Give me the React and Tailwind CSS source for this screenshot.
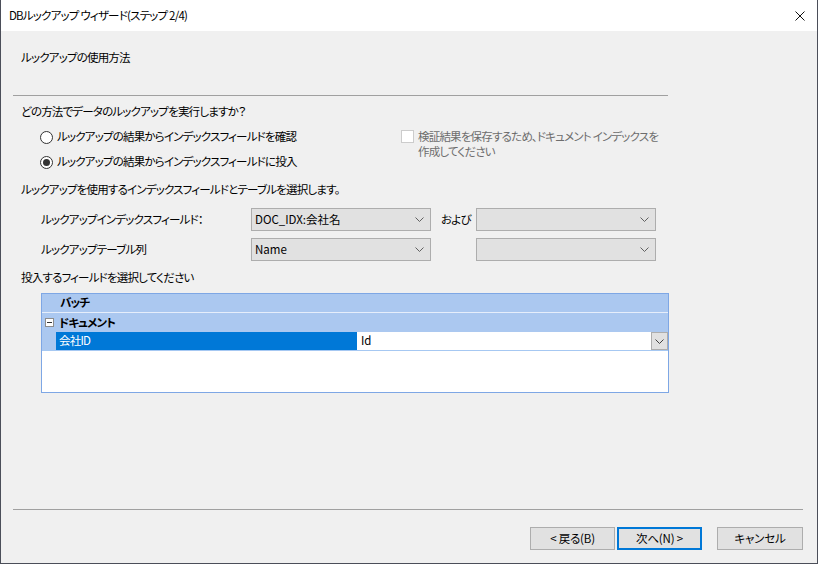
import React from 'react';

const Chevron = ({ color = '#606060' }) => (
  <svg width="9" height="5" viewBox="0 0 9 5" fill="none">
    <polyline points="0.5,0.5 4.5,4.5 8.5,0.5" stroke={color} strokeWidth="1" />
  </svg>
);

const Radio = ({ checked, label }) => (
  <div className="h-[16px] flex items-center gap-[4px]">
    <span className="w-[13px] h-[13px] rounded-full border border-[#333333] bg-white flex items-center justify-center">
      {checked && <span className="w-[7px] h-[7px] rounded-full bg-[#333333]" />}
    </span>
    <span>{label}</span>
  </div>
);

const Combo = ({ value }) => (
  <div className="w-[180px] h-[23px] bg-[#e1e1e1] border border-[#adadad] flex items-center justify-between pl-[3px] pr-[6px]">
    <span className="tracking-normal">{value}</span>
    <Chevron />
  </div>
);

const Button = ({ children, focused, className = '' }) => (
  <div
    className={`w-[85px] h-[23px] bg-[#e1e1e1] flex items-center justify-center tracking-[-0.2px] whitespace-pre ${
      focused ? 'border-2 border-[#0078d7]' : 'border border-[#adadad]'
    } ${className}`}
  >
    {children}
  </div>
);

export default function App() {
  return (
    <div className="w-[818px] h-[564px] flex flex-col border-x border-b border-[#4b4e59] text-[11.5px] tracking-[-0.8px] text-black font-['Noto_Sans_CJK_JP','Noto_Sans',sans-serif] [font-feature-settings:'palt'] leading-none">
      <div className="h-[31px] shrink-0 bg-white flex items-center justify-between pl-[8px] pr-[12px]">
        <span className="whitespace-pre">DBルックアップ ウィザード(ステップ 2/4)</span>
        <svg width="10" height="10" viewBox="0 0 10 10">
          <path d="M0.5 0.5 L9.5 9.5 M9.5 0.5 L0.5 9.5" stroke="#111" strokeWidth="1" />
        </svg>
      </div>

      <div className="flex-1 bg-[#f0f0f0] flex flex-col">
        <div className="mt-[19px] ml-[20px] h-[16px] flex items-center">ルックアップの使用方法</div>
        <div className="mt-[29px] ml-[12px] w-[655px] h-px bg-[#a0a0a0]" />
        <div className="mt-[8px] ml-[20px] h-[16px] flex items-center">どの方法でデータのルックアップを実行しますか？</div>

        <div className="mt-[9px] flex">
          <div className="ml-[39px] w-[361px] flex flex-col gap-[9px]">
            <Radio label="ルックアップの結果からインデックスフィールドを確認" />
            <Radio checked label="ルックアップの結果からインデックスフィールドに投入" />
          </div>
          <div className="flex gap-[4px]">
            <span className="mt-[1px] w-[13px] h-[13px] bg-white border border-[#cccccc]" />
            <div className="text-[#6d6d6d] flex flex-col">
              <div className="h-[15px] flex items-center">検証結果を保存するため、ドキュメント インデックスを</div>
              <div className="h-[15px] flex items-center">作成してください</div>
            </div>
          </div>
        </div>

        <div className="mt-[12px] ml-[20px] h-[16px] flex items-center">ルックアップを使用するインデックスフィールドとテーブルを選択します。</div>

        <div className="mt-[10px] ml-[40px] flex items-center">
          <span className="w-[210px]">ルックアップインデックスフィールド：</span>
          <Combo value="DOC_IDX:会社名" />
          <span className="w-[45px] pl-[10px]">および</span>
          <Combo value="" />
        </div>
        <div className="mt-[7px] ml-[40px] flex items-center">
          <span className="w-[210px]">ルックアップテーブル列</span>
          <Combo value="Name" />
          <span className="w-[45px]" />
          <Combo value="" />
        </div>

        <div className="mt-[9px] ml-[20px] h-[16px] flex items-center">投入するフィールドを選択してください</div>

        <div className="mt-[7px] ml-[40px] w-[628px] h-[100px] border border-[#7ea7e5] bg-white flex flex-col">
          <div className="h-[18px] bg-[#abc8f0] flex items-center pl-[18px] font-bold">バッチ</div>
          <div className="h-px bg-[#e6eefb]" />
          <div className="h-[19px] bg-[#abc8f0] flex items-center pl-[3px] font-bold">
            <span className="w-[9px] h-[9px] border border-[#8c8c8c] bg-white flex items-center justify-center mr-[5px]">
              <span className="w-[5px] h-px bg-[#333]" />
            </span>
            ドキュメント
          </div>
          <div className="h-[18px] flex">
            <div className="w-[14px] bg-[#abc8f0]" />
            <div className="w-[301px] bg-[#0078d7] text-white flex items-center pl-[3px]">会社ID</div>
            <div className="flex-1 bg-white flex items-center justify-between pl-[4px]">
              <span className="tracking-normal">Id</span>
              <span className="w-[17px] h-[18px] bg-[#e1e1e1] border border-[#adadad] flex items-center justify-center">
                <Chevron color="#404040" />
              </span>
            </div>
          </div>
          <div className="h-px bg-[#a6c8f2]" />
        </div>

        <div className="mt-[116px] ml-[12px] w-[790px] h-px bg-[#a0a0a0]" />

        <div className="mt-[17px] flex justify-end pr-[14px]">
          <Button>{'< 戻る(B)'}</Button>
          <Button focused className="ml-[2px]">{'次へ(N) >'}</Button>
          <Button className="ml-[15px] w-[86px]">キャンセル</Button>
        </div>
      </div>
    </div>
  );
}
